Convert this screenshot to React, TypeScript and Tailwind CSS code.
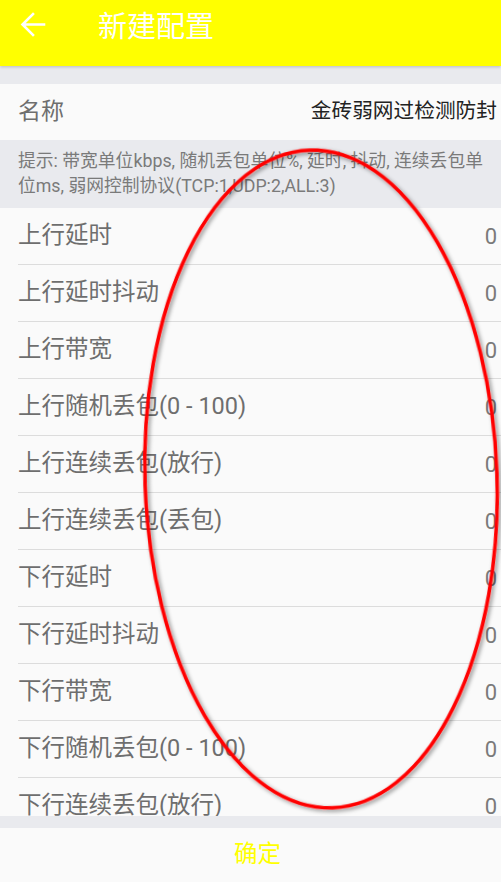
const rows: string[] = [
  "上行延时",
  "上行延时抖动",
  "上行带宽",
  "上行随机丢包(0 - 100)",
  "上行连续丢包(放行)",
  "上行连续丢包(丢包)",
  "下行延时",
  "下行延时抖动",
  "下行带宽",
  "下行随机丢包(0 - 100)",
  "下行连续丢包(放行)",
]

const font = { fontFamily: '"Roboto", "Noto Sans CJK SC", sans-serif' }

const Row = ({ label }: { label: string }) => {
  return (
    <div className="h-[57px] shrink-0 pl-[18px] bg-[#fafafa]">
      <div className="h-full flex items-center justify-between border-b border-[#dcdcdc] pr-1">
        <span className="text-[23.5px] text-[#6e6e6e]">{label}</span>
        <span className="text-[22px] text-[#7a7a7a]">0</span>
      </div>
    </div>
  )
}

export default function App() {
  return (
    <div className="relative w-[501px] h-[882px] flex flex-col bg-[#e9eaee] overflow-hidden" style={font}>
      <div className="h-[66px] shrink-0 bg-[#ffff00] flex items-center shadow-[0_1px_3px_rgba(0,0,0,0.2)] z-10">
        <svg width="66" height="50" viewBox="0 0 66 50" className="shrink-0 -mt-[16px]">
          <path d="M44 24.5H23.5M33 14L22.5 24.5L33 35" fill="none" stroke="#fff" strokeWidth="2.6" strokeLinecap="square" />
        </svg>
        <h1 className="ml-[32px] text-[29px] text-white font-normal -mt-[10px]">新建配置</h1>
      </div>

      <div className="h-[18px] shrink-0" />

      <div className="h-[56px] shrink-0 bg-[#fafafa] flex items-center justify-between pl-[18px] pr-1">
        <span className="text-[23px] text-[#6e6e6e]">名称</span>
        <span className="text-[20.7px] text-[#222]">金砖弱网过检测防封</span>
      </div>

      <div className="h-[68px] shrink-0 pl-[18px] pr-[12px] pt-[8px] text-[17.8px] leading-[25px] text-[#7a7a7a]">
        提示: 带宽单位kbps, 随机丢包单位%, 延时, 抖动, 连续丢包单位ms, 弱网控制协议(TCP:1,UDP:2,ALL:3)
      </div>

      <div className="flex-1 min-h-0 overflow-hidden flex flex-col">
        {rows.map((r) => (
          <Row key={r} label={r} />
        ))}
      </div>

      <div className="h-[12px] shrink-0" />

      <button className="h-[54px] shrink-0 bg-[#fafafa] flex items-center justify-center pl-[14px] text-[23.5px] text-[#ffff00]">
        确定
      </button>

      <svg className="absolute inset-0 pointer-events-none" width="501" height="882" viewBox="0 0 501 882">
        <defs>
          <filter id="mark-shadow" x="-10%" y="-10%" width="120%" height="120%">
            <feDropShadow dx="2" dy="2" stdDeviation="2" floodColor="#000" floodOpacity="0.45" />
          </filter>
        </defs>
        <ellipse
          cx="321"
          cy="479"
          rx="176"
          ry="329"
          transform="rotate(-2 321 479)"
          fill="none"
          stroke="#ff0000"
          strokeWidth="3.5"
          filter="url(#mark-shadow)"
        />
      </svg>
    </div>
  )
}
